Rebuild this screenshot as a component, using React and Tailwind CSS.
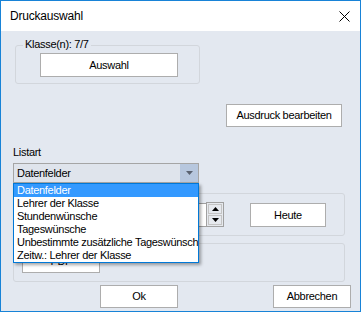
const items = [
  "Datenfelder",
  "Lehrer der Klasse",
  "Stundenwünsche",
  "Tageswünsche",
  "Unbestimmte zusätzliche Tageswünsche",
  "Zeitw.: Lehrer der Klasse",
];

const Btn = ({ className, children }) => (
  <div
    className={`flex items-center justify-center bg-white border border-[#adadad] text-[11px] text-black ${className}`}
  >
    {children}
  </div>
);

const App = () => {
  return (
    <div
      className="w-[361px] h-[312px] border border-[#1883d7] flex flex-col overflow-hidden"
      style={{ fontFamily: '"Liberation Sans", Arial, sans-serif' }}
    >
      {/* title bar */}
      <div className="h-[30px] bg-white flex items-center justify-between shrink-0">
        <span className="ml-[9px] text-[12px] tracking-[-0.2px] text-black">Druckauswahl</span>
        <svg className="mr-[10px]" width="11" height="11" viewBox="0 0 11 11">
          <path d="M0.5 0.5 L10.5 10.5 M10.5 0.5 L0.5 10.5" stroke="#000" strokeWidth="1" fill="none" />
        </svg>
      </div>

      {/* body */}
      <div className="relative flex-1 bg-[#e3e8f0] flex flex-col text-[11px] leading-[13px] tracking-[-0.3px] text-black">
        {/* Klasse(n) group */}
        <div className="relative ml-[14px] mt-[14px] w-[185px] h-[39px] border border-[#d2d6dc] rounded-[3px]">
          <span className="absolute -top-[8px] left-[7px] bg-[#e3e8f0] px-[2px]">Klasse(n): 7/7</span>
          <Btn className="ml-[24px] mt-[7px] w-[138px] h-[24px]">Auswahl</Btn>
        </div>

        <Btn className="ml-[225px] mt-[20px] w-[116px] h-[23px]">Ausdruck bearbeiten</Btn>

        <span className="ml-[12px] mt-[19px]">Listart</span>

        {/* combobox */}
        <div className="ml-[12px] mt-[4px] w-[186px] h-[20px] border border-[#a5a5a5] bg-[#dfe4ec] flex">
          <span className="flex-1 pl-[3px] flex items-center">Datenfelder</span>
          <div className="w-[18px] bg-[#b7c7de] flex items-center justify-center">
            <svg width="7" height="4" viewBox="0 0 7 4">
              <path d="M0 0 H7 L3.5 4 Z" fill="#5a6270" />
            </svg>
          </div>
        </div>

        {/* date group */}
        <div className="ml-[12px] mt-[10px] w-[332px] h-[43px] border border-[#d2d6dc] rounded-[3px] flex items-start">
          <div className="ml-[106px] mt-[9px] w-[86px] h-[24px] bg-white border border-[#a0a0a0] border-r-0" />
          <div className="mt-[8px] w-[18px] h-[25px] border border-[#a0a0a0] bg-[#e6e9ee] flex flex-col gap-[1px] p-[1px]">
            <div className="flex-1 border border-[#c4c4c4] flex items-center justify-center">
              <svg width="7" height="4" viewBox="0 0 7 4">
                <path d="M0 4 H7 L3.5 0 Z" fill="#000" />
              </svg>
            </div>
            <div className="flex-1 border border-[#c4c4c4] flex items-center justify-center">
              <svg width="7" height="4" viewBox="0 0 7 4">
                <path d="M0 0 H7 L3.5 4 Z" fill="#000" />
              </svg>
            </div>
          </div>
          <Btn className="ml-[26px] mt-[9px] w-[76px] h-[24px]">Heute</Btn>
        </div>

        {/* PDF group */}
        <div className="ml-[12px] mt-[7px] w-[332px] h-[39px] border border-[#d2d6dc] rounded-[3px]">
          <Btn className="ml-[8px] mt-[6px] w-[78px] h-[23px]">PDF</Btn>
        </div>

        {/* bottom buttons */}
        <div className="flex mt-[3px]">
          <Btn className="ml-[99px] w-[78px] h-[23px]">Ok</Btn>
          <Btn className="ml-[95px] w-[78px] h-[23px]">Abbrechen</Btn>
        </div>

        {/* open dropdown list */}
        <div className="absolute left-[12px] top-[152px] w-[186px] h-[80px] bg-white border border-[#0078d7] shadow-[2px_2px_3px_rgba(0,0,0,0.35)] overflow-hidden">
          {items.map((it, i) => (
            <div
              key={it}
              className={`h-[13px] pl-[3px] whitespace-nowrap leading-[13px] ${
                i === 0 ? "bg-[#3399ff] text-white" : "text-black"
              }`}
            >
              {it}
            </div>
          ))}
        </div>
      </div>
    </div>
  );
};

export default App;
